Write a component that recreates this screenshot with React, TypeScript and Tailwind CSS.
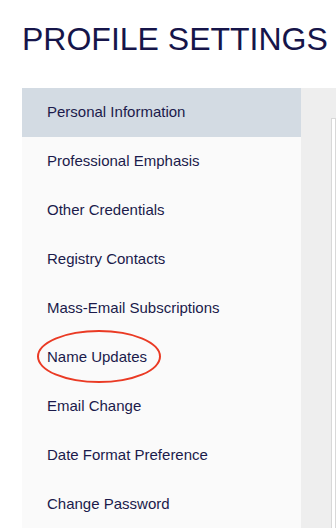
const items = [
  "Personal Information",
  "Professional Emphasis",
  "Other Credentials",
  "Registry Contacts",
  "Mass-Email Subscriptions",
  "Name Updates",
  "Email Change",
  "Date Format Preference",
  "Change Password",
];

export default function App() {
  return (
    <div
      className="min-h-[528px] bg-white overflow-hidden"
      style={{ fontFamily: '"Liberation Sans", Arial, sans-serif' }}
    >
      <h1 className="pt-[23px] pl-[22px] text-[32px] leading-none text-[#16154a] whitespace-nowrap">
        PROFILE SETTINGS
      </h1>

      <div className="mt-[33px] ml-[22px] flex">
        {/* side menu */}
        <ul className="w-[279px] shrink-0 bg-[#fafafa]">
          {items.map((item, i) => (
            <li
              key={item}
              className={`relative h-[49px] flex items-center pl-[25px] text-[15px] text-[#1b1a4b] ${
                i === 0 ? "bg-[#d3dbe3]" : ""
              }`}
            >
              {item}
              {item === "Name Updates" && (
                <span className="absolute left-[15px] top-[-3px] w-[124px] h-[53px] rounded-[50%] border-[2.5px] border-[#ea3a24]" />
              )}
            </li>
          ))}
        </ul>

        {/* content area */}
        <div className="flex-1 bg-[#eeeeee] pt-[30px] pl-[30px]">
          <div className="h-[420px] bg-white border border-[#d8d8d8]" />
        </div>
      </div>
    </div>
  );
}
